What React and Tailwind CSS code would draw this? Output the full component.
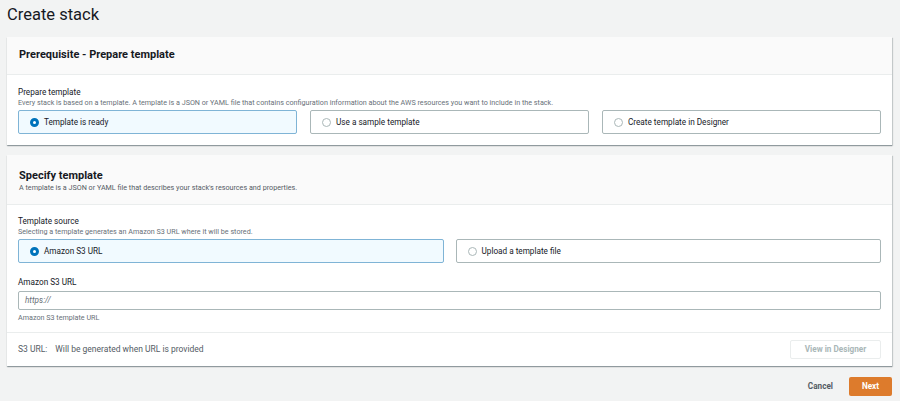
import React from 'react';

const Radio = ({ checked }) =>
  checked ? (
    <span className="w-[9px] h-[9px] rounded-full border-[3px] border-[#0073bb] bg-white shrink-0" />
  ) : (
    <span className="w-[9px] h-[9px] rounded-full border border-[#aab7b8] bg-white shrink-0" />
  );

const Tile = ({ label, checked }) => (
  <div
    className={`flex-1 h-[24px] flex items-center gap-[5px] px-[11px] border rounded-[2px] text-[8.2px] text-[#16191f] ${
      checked ? 'bg-[#f1faff] border-[#7fb4d6]' : 'bg-white border-[#aab7b8]'
    }`}
  >
    <Radio checked={checked} />
    <span>{label}</span>
  </div>
);

const App = () => {
  return (
    <div
      className="w-[900px] h-[401px] bg-[#f2f3f3] overflow-hidden text-[#16191f]"
      style={{ fontFamily: 'Roboto, "Liberation Sans", sans-serif' }}
    >
      <h1 className="text-[16.5px] leading-[20px] pt-[5px] pl-[7px] h-[37px]">Create stack</h1>

      {/* Prerequisite panel */}
      <div className="ml-[7px] w-[885px] bg-white shadow-[0_1px_1px_rgba(0,28,36,0.3),1px_1px_1px_rgba(0,28,36,0.15)]">
        <div className="h-[38px] bg-[#fafafa] border-b border-[#eaeded] flex items-center px-[12px]">
          <h2 className="text-[11px] font-bold">Prerequisite - Prepare template</h2>
        </div>
        <div className="px-[11px] pt-[12px] pb-[11px]">
          <div className="text-[8.2px] leading-[11px]">Prepare template</div>
          <div className="text-[7.2px] leading-[9px] text-[#687078]">
            Every stack is based on a template. A template is a JSON or YAML file that contains configuration information about the AWS resources you want to include in the stack.
          </div>
          <div className="flex gap-[13px] mt-[3px]">
            <Tile label="Template is ready" checked />
            <Tile label="Use a sample template" />
            <Tile label="Create template in Designer" />
          </div>
        </div>
      </div>

      {/* Specify template panel */}
      <div className="ml-[7px] mt-[10px] w-[885px] bg-white shadow-[0_1px_1px_rgba(0,28,36,0.3),1px_1px_1px_rgba(0,28,36,0.15)]">
        <div className="h-[50px] bg-[#fafafa] border-b border-[#eaeded] px-[12px] pt-[13px]">
          <h2 className="text-[11px] leading-[15px] font-bold">Specify template</h2>
          <div className="text-[7.2px] leading-[9px] text-[#545b64]">
            A template is a JSON or YAML file that describes your stack's resources and properties.
          </div>
        </div>
        <div className="px-[11px] pt-[11px]">
          <div className="text-[8.2px] leading-[11px]">Template source</div>
          <div className="text-[7.2px] leading-[9px] text-[#687078]">
            Selecting a template generates an Amazon S3 URL where it will be stored.
          </div>
          <div className="flex gap-[12px] mt-[3px]">
            <Tile label="Amazon S3 URL" checked />
            <Tile label="Upload a template file" />
          </div>
          <div className="text-[8.2px] leading-[11px] mt-[14px]">Amazon S3 URL</div>
          <div className="mt-[3px] h-[19px] border border-[#aab7b8] rounded-[2px] flex items-center px-[6px] text-[8.2px] italic text-[#687078]">
            https://
          </div>
          <div className="text-[7.2px] leading-[9px] text-[#687078] mt-[3px] pb-[10px]">Amazon S3 template URL</div>
        </div>
        <div className="border-t border-[#eaeded] h-[34px] px-[11px] flex items-center justify-between">
          <div className="text-[8.5px] text-[#545b64]">
            S3 URL:<span className="ml-[8px]">Will be generated when URL is provided</span>
          </div>
          <button className="w-[91px] h-[19px] border border-[#eaeded] rounded-[2px] text-[8.2px] font-bold text-[#aab7b8] bg-white">
            View in Designer
          </button>
        </div>
      </div>

      <div className="flex justify-end items-center gap-[16px] pr-[8px] mt-[11px]">
        <button className="text-[8.2px] font-bold text-[#545b64]">Cancel</button>
        <button className="w-[43px] h-[19px] bg-[#dd7b2c] rounded-[2px] text-[8.2px] font-bold text-white">Next</button>
      </div>
    </div>
  );
};

export default App;
